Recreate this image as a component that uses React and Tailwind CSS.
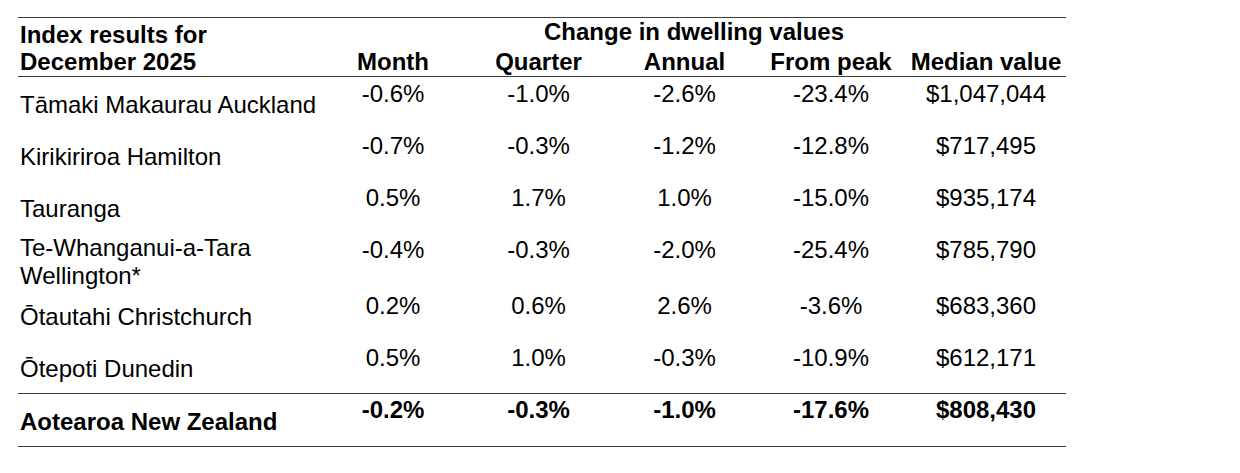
import React from 'react';

const cols = 'grid grid-cols-[304px_142px_149px_143px_150px_160px]';

const rows = [
  { name: ['Tāmaki Makaurau Auckland'], vals: ['-0.6%', '-1.0%', '-2.6%', '-23.4%', '$1,047,044'] },
  { name: ['Kirikiriroa Hamilton'], vals: ['-0.7%', '-0.3%', '-1.2%', '-12.8%', '$717,495'] },
  { name: ['Tauranga'], vals: ['0.5%', '1.7%', '1.0%', '-15.0%', '$935,174'] },
  { name: ['Te-Whanganui-a-Tara', 'Wellington*'], vals: ['-0.4%', '-0.3%', '-2.0%', '-25.4%', '$785,790'], tall: true },
  { name: ['Ōtautahi Christchurch'], vals: ['0.2%', '0.6%', '2.6%', '-3.6%', '$683,360'] },
  { name: ['Ōtepoti Dunedin'], vals: ['0.5%', '1.0%', '-0.3%', '-10.9%', '$612,171'] },
];

const App = () => {
  return (
    <div className="min-h-screen bg-white pt-[17px] pl-[18px] font-['Liberation_Sans',Arial,sans-serif] text-[24px] leading-[1.15] text-black">
      <div className="w-[1048px] border-t border-b border-[#3a3a3a]">
        {/* Header */}
        <div className="flex h-[59px] border-b border-[#3a3a3a] font-bold">
          <div className="w-[304px] flex flex-col justify-end pl-[2px]">
            <div>Index results for</div>
            <div>December 2025</div>
          </div>
          <div className="flex-1 flex flex-col justify-between">
            <div className="text-center">Change in dwelling values</div>
            <div className="grid grid-cols-[142px_149px_143px_150px_160px] text-center">
              <div>Month</div>
              <div>Quarter</div>
              <div>Annual</div>
              <div>From peak</div>
              <div>Median value</div>
            </div>
          </div>
        </div>

        {/* Body rows */}
        {rows.map((r) => (
          <div key={r.name[0]} className={`${cols} ${r.tall ? 'h-[56px]' : 'h-[52px]'}`}>
            <div className={`self-center pl-[2px] whitespace-nowrap ${r.tall ? 'pt-[1px]' : 'pt-[4px]'}`}>
              {r.name.map((line) => (
                <div key={line}>{line}</div>
              ))}
            </div>
            {r.vals.map((v, i) => (
              <div key={i} className="pt-[3px] text-center">
                {v}
              </div>
            ))}
          </div>
        ))}

        {/* Total */}
        <div className={`${cols} h-[53px] border-t border-[#3a3a3a] font-bold`}>
          <div className="self-center pl-[2px] pt-[3px]">Aotearoa New Zealand</div>
          <div className="pt-[2px] text-center">-0.2%</div>
          <div className="pt-[2px] text-center">-0.3%</div>
          <div className="pt-[2px] text-center">-1.0%</div>
          <div className="pt-[2px] text-center">-17.6%</div>
          <div className="pt-[2px] text-center">$808,430</div>
        </div>
      </div>
    </div>
  );
};

export default App;
